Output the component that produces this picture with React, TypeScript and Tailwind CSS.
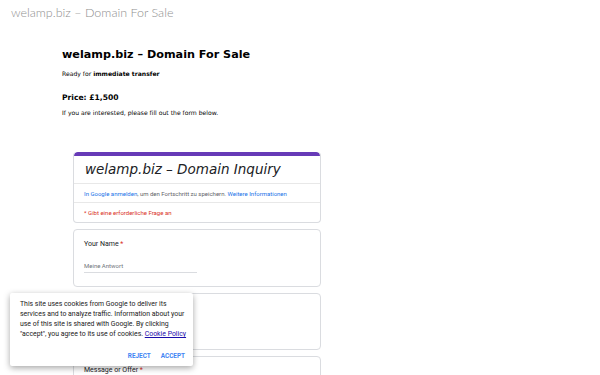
import React from "react";

export default function App() {
  return (
    <div className="relative w-[600px] h-[375px] overflow-hidden bg-white" style={{ fontFamily: "'DejaVu Sans', sans-serif" }}>
      <div className="pl-[11px] pt-[4px] h-[27px] text-[12.5px] text-[#8f8f8f] font-light" style={{ fontFamily: "Lato, sans-serif" }}>
        welamp.biz – Domain For Sale
      </div>
      <div className="pl-[62px] pt-[21px]">
        <div className="text-[11.2px] font-bold text-black leading-[14px]">welamp.biz – Domain For Sale</div>
        <div className="mt-[7px] text-[6.1px] text-black leading-[9px]">
          Ready for <b>immediate transfer</b>
        </div>
        <div className="mt-[14px] text-[7.6px] font-bold text-black leading-[11px]">Price: £1,500</div>
        <div className="mt-[5px] text-[6.1px] text-black leading-[9px]">If you are interested, please fill out the form below.</div>
      </div>
      <div className="ml-[73px] mt-[35px] w-[248px] flex flex-col gap-[6px]" style={{ fontFamily: "Roboto, sans-serif" }}>
        <div className="rounded-[4px] border border-[#dadce0] border-t-0 overflow-hidden">
          <div className="h-[4px] bg-[#673ab7] rounded-t-[4px]" />
          <div className="h-[28px] flex items-center pl-[11px] text-[13.5px] italic text-[#202124] border-b border-[#e8e8e8]" style={{ fontFamily: "'DejaVu Sans', sans-serif" }}>
            welamp.biz – Domain Inquiry
          </div>
          <div className="h-[19px] flex items-center pl-[10px] text-[6px] text-[#5f6368] border-b border-[#e8e8e8]">
            <span className="text-[#1a73e8]">In Google anmelden</span>, um den Fortschritt zu speichern.&nbsp;<span className="text-[#1a73e8]">Weitere Informationen</span>
          </div>
          <div className="h-[19px] flex items-center pl-[10px] text-[6px] text-[#d93025]">* Gibt eine erforderliche Frage an</div>
        </div>
        <div className="h-[58px] rounded-[4px] border border-[#dadce0] pl-[10px] pt-[9px]">
          <div className="text-[7px] text-[#202124] leading-[10px]">
            Your Name <span className="text-[#d93025]">*</span>
          </div>
          <div className="mt-[13px] w-[113px] border-b border-[#dadce0] pb-[2px] text-[6px] text-[#70757a] leading-[8px]">Meine Antwort</div>
        </div>
        <div className="h-[57px] rounded-[4px] border border-[#dadce0]" />
        <div className="h-[40px] rounded-[4px] border border-[#dadce0] pl-[10px] pt-[8px]">
          <div className="text-[7px] text-[#202124] leading-[10px]">
            Message or Offer <span className="text-[#d93025]">*</span>
          </div>
        </div>
      </div>
      <div className="absolute left-[10px] top-[293px] w-[183px] h-[73px] bg-white shadow-[0_2px_6px_rgba(0,0,0,0.35)] rounded-[2px] pl-[10px] pr-[6px] pt-[6px]" style={{ fontFamily: "Roboto, sans-serif" }}>
        <div className="text-[6.9px] leading-[10px] text-[#212121]">
          This site uses cookies from Google to deliver its services and to analyze traffic. Information about your use of this site is shared with Google. By clicking "accept", you agree to its use of cookies. <span className="text-[#1a0dab] underline">Cookie Policy</span>
        </div>
        <div className="flex justify-end gap-[10px] mt-[13px] pr-[2px] text-[6.4px] font-bold text-[#4285f4] leading-[8px]">
          <span>REJECT</span>
          <span>ACCEPT</span>
        </div>
      </div>
    </div>
  );
}
